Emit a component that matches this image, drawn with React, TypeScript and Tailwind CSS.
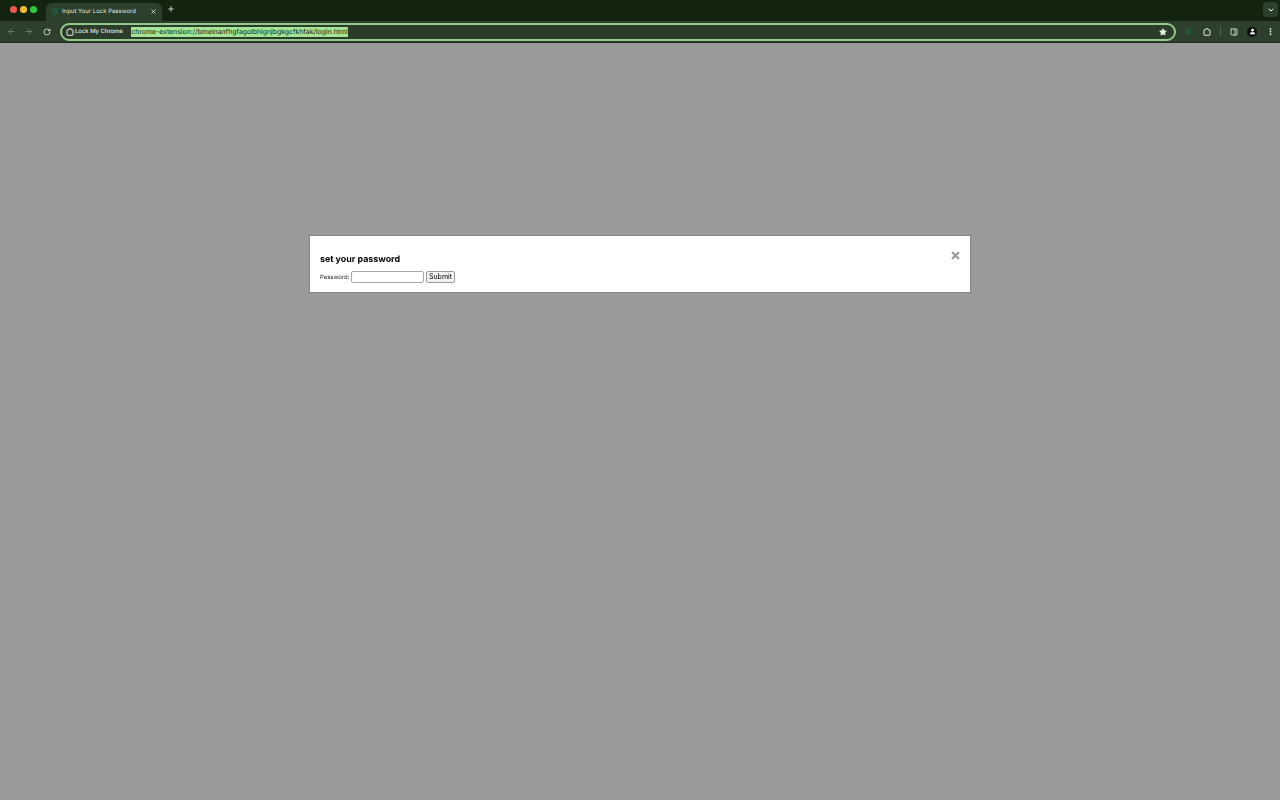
import { ArrowLeft, ArrowRight, RotateCw, Star, Plus, X, ChevronDown, PanelRight, MoreVertical, User } from "lucide-react";

function Shield({ className }: { className: string }) {
  return (
    <svg viewBox="0 0 16 16" className={className} fill="currentColor">
      <path d="M8 1.5 13.5 3.5V8c0 3.2-2.3 5.4-5.5 6.5C4.8 13.4 2.5 11.2 2.5 8V3.5L8 1.5Z" />
    </svg>
  );
}

// extension glyph: rounded square with a small knob on top
function Ext({ className }: { className: string }) {
  return (
    <svg viewBox="0 0 16 16" className={className} fill="none" stroke="currentColor" strokeWidth="2" strokeLinejoin="round">
      <path d="M3 3.5h3V2.5a2 2 0 0 1 4 0v1h3a1 1 0 0 1 1 1v9a1 1 0 0 1-1 1H3a1 1 0 0 1-1-1v-9a1 1 0 0 1 1-1Z" />
    </svg>
  );
}

export default function App() {
  return (
    <div className="flex h-[800px] w-[1280px] flex-col overflow-hidden bg-[#9a9a9a] font-['Inter','Liberation_Sans',sans-serif] antialiased [text-rendering:geometricPrecision]">
      {/* Tab strip */}
      <div className="flex h-[21px] items-end bg-[#13240f] pl-[10px]">
        <div className="mb-[8px] flex items-center gap-[3px] self-end">
          <span className="h-[7px] w-[7px] rounded-full bg-[#ee5a50]" />
          <span className="h-[7px] w-[7px] rounded-full bg-[#f5bd2e]" />
          <span className="h-[7px] w-[7px] rounded-full bg-[#2fc93f]" />
        </div>
        <div className="ml-[9px] flex h-[18px] w-[116px] items-center rounded-t-[6px] bg-[#2d3f2d] pb-[2px] pl-[4px] pr-[5px]">
          <Shield className="h-[10px] w-[10px] text-[#23543a]" />
          <span className="ml-[2px] flex-1 whitespace-nowrap text-[6px] text-[#dfe6dc]">Input Your Lock Password</span>
          <X className="h-[7px] w-[7px] text-white" strokeWidth={2.5} />
        </div>
        <Plus className="mb-[8px] ml-[5px] h-[8px] w-[8px] text-[#e4e9e2]" strokeWidth={2.5} />
        <div className="mb-[4px] ml-auto mr-[2px] flex h-[15px] w-[15px] items-center justify-center rounded-[4px] bg-[#2d3f2d]">
          <ChevronDown className="h-[8px] w-[8px] text-white" strokeWidth={3} />
        </div>
      </div>

      {/* Toolbar */}
      <div className="flex h-[22px] items-center border-b border-[#1d2a1c] bg-[#2d3f2d] pl-[7px]">
        <ArrowLeft className="h-[9px] w-[9px] text-[#6f7d6d]" strokeWidth={2.5} />
        <ArrowRight className="ml-[8px] h-[9px] w-[9px] text-[#6f7d6d]" strokeWidth={2.5} />
        <RotateCw className="ml-[10px] h-[8px] w-[8px] text-[#e0e6de]" strokeWidth={2.5} />
        <div className="ml-[9px] flex h-[18px] w-[1116px] items-center rounded-full border-2 border-[#93c98a] bg-[#2b3c2a] pl-[3.5px] pr-[7.5px]">
          <Ext className="h-[8px] w-[8px] text-[#eef2ec]" />
          <span className="ml-[1.5px] whitespace-nowrap pt-[1px] text-[5.9px] font-medium text-[#e8ede6]">Lock My Chrome</span>
          <span className="ml-[8px] whitespace-nowrap bg-[#a3e495] px-[0.5px] text-[6.9px] leading-[10px] text-[#0f1f0c]">chrome-extension://bmeinanfhgfagolbhignjbgkgcfkhfak/login.html</span>
          <Star className="ml-auto h-[8px] w-[8px] fill-[#e8ede6] text-[#e8ede6]" strokeWidth={2} />
        </div>
        <Shield className="ml-[8px] h-[9px] w-[9px] text-[#23543a]" />
        <Ext className="ml-[10px] h-[8px] w-[8px] text-[#e4e9e2]" />
        <span className="ml-[9px] h-[9px] w-px bg-[#55644f]" />
        <PanelRight className="ml-[9px] h-[8px] w-[8px] text-[#e4e9e2]" strokeWidth={2.5} />
        <div className="ml-[9px] flex h-[10px] w-[10px] items-center justify-center rounded-full bg-[#0c0f0b]">
          <User className="h-[7px] w-[7px] fill-white text-white" strokeWidth={2} />
        </div>
        <MoreVertical className="ml-[9px] h-[9px] w-[9px] text-[#e4e9e2]" strokeWidth={3} />
      </div>

      {/* Page with dialog */}
      <div className="flex-1 pt-[192px]">
        <div className="mx-auto flex h-[58px] w-[662px] items-start justify-between border border-[#858585] bg-white pl-[10px] pr-[9px]">
          <div className="pt-[17px] [will-change:transform]">
            <h2 className="text-[8.9px] leading-[13px] font-bold text-black">set your password</h2>
            <div className="mt-[5px] flex items-center">
              <label className="text-[6px] text-[#222]">Password:</label>
              <input type="text" className="ml-[1.5px] h-[12px] w-[73px] rounded-[2px] border border-[#a8a8a8] bg-white" />
              <button className="ml-[2px] flex h-[12px] w-[29px] items-center justify-center rounded-[2px] border border-[#9a9a9a] bg-[#f2f2f2] text-[7px] text-black">Submit</button>
            </div>
          </div>
          <X className="mt-[13.5px] h-[11px] w-[11px] text-[#9c9c9c]" strokeWidth={5} />
        </div>
      </div>
    </div>
  );
}
